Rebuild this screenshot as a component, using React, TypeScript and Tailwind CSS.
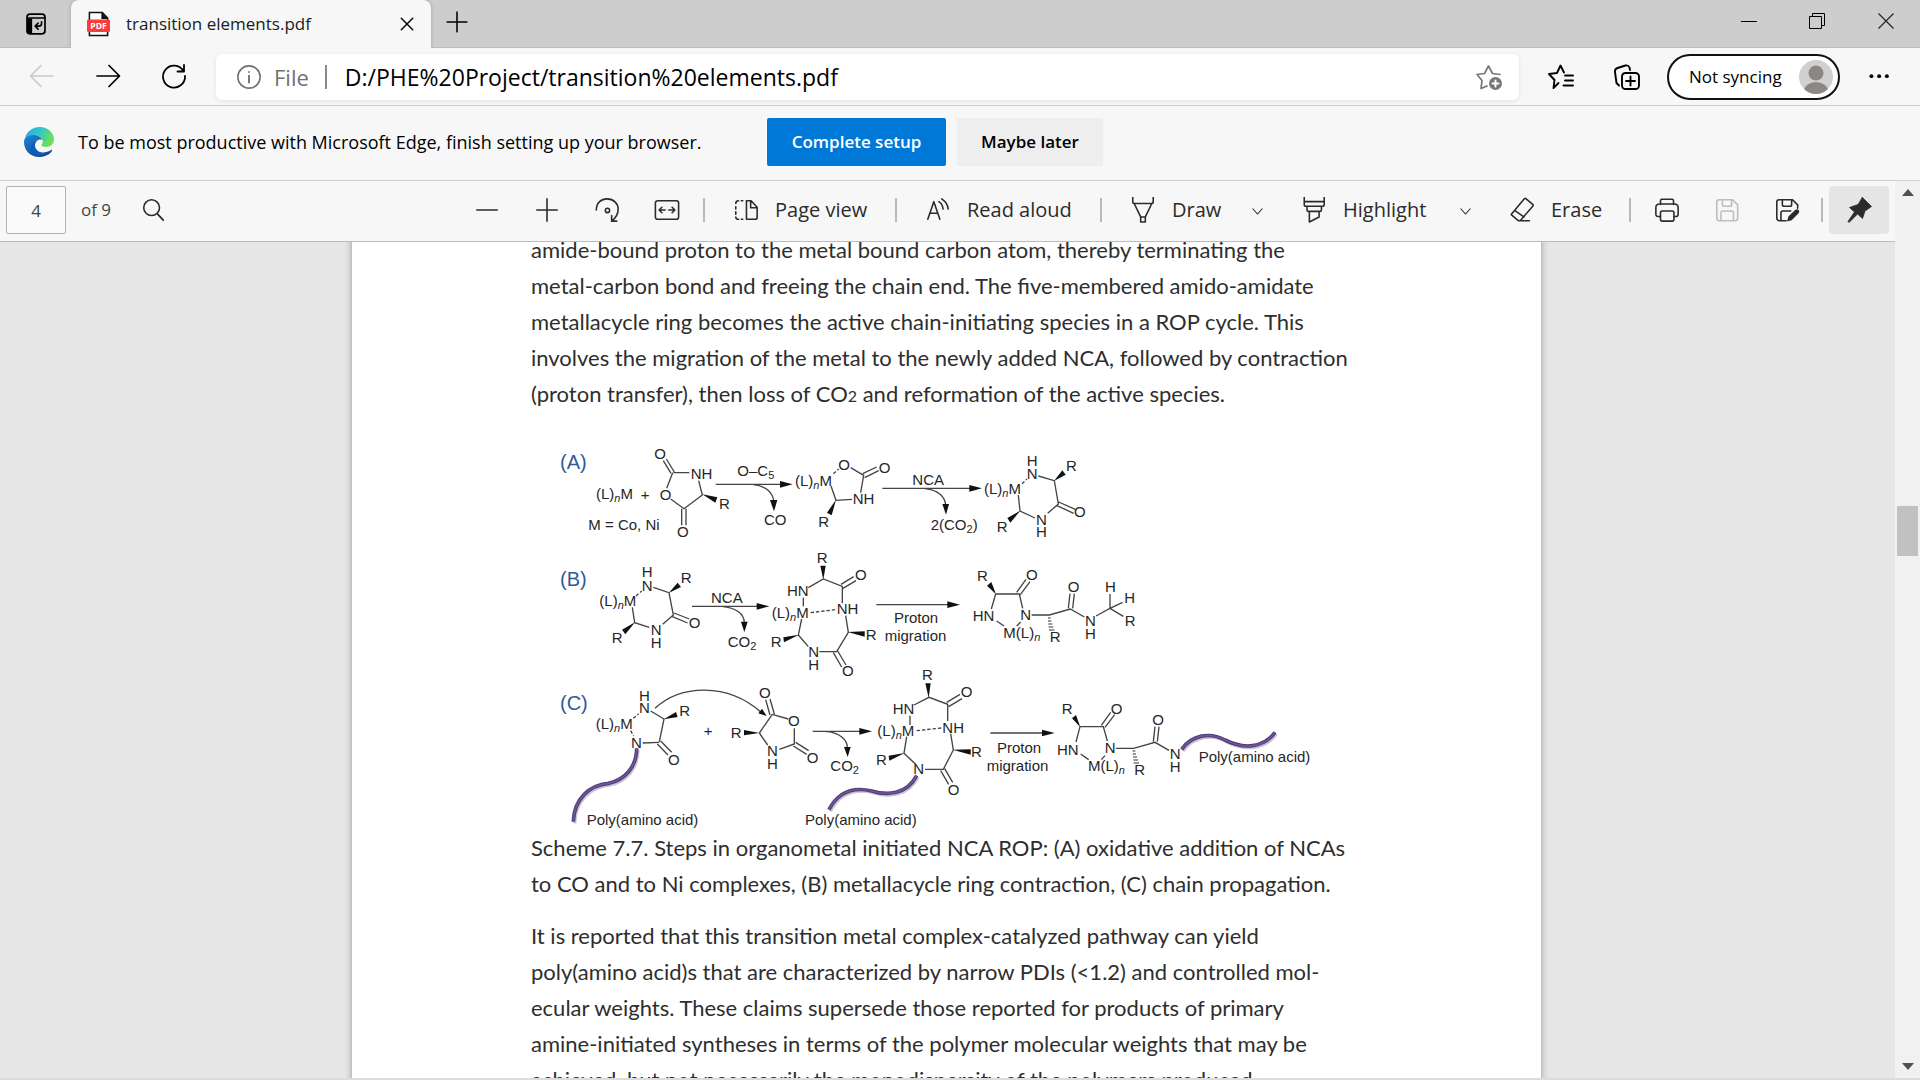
import React from "react";

type IconProps = { children: React.ReactNode; className?: string; size?: number };

function Icon({ children, className = "", size = 28 }: IconProps) {
  return (
    <svg
      width={size}
      height={size}
      viewBox="0 0 28 28"
      fill="none"
      stroke="currentColor"
      strokeWidth={1.7}
      strokeLinecap="round"
      strokeLinejoin="round"
      aria-hidden="true"
      className={`shrink-0 ${className}`}
    >
      {children}
    </svg>
  );
}

/* ---------- Scheme drawing: each fragment is laid out on a grid of thirds of a unit ---------- */

type Label = [number, number, string];

function AtomText({ x, y, value }: { x: number; y: number; value: string }) {
  const parts = value.split(/(_[n\d])/).filter(Boolean);
  let lowered = false;
  return (
    <text x={x} y={y}>
      {parts.map((p, i) => {
        if (p[0] === "_") {
          lowered = true;
          return (
            <tspan key={i} dy={3} fontSize={11} fontStyle={p[1] === "n" ? "italic" : "normal"}>
              {p[1]}
            </tspan>
          );
        }
        const dy = lowered ? -3 : 0;
        lowered = false;
        return (
          <tspan key={i} dy={dy}>
            {p}
          </tspan>
        );
      })}
    </text>
  );
}

type FragmentProps = {
  at: [number, number];
  bonds: string;
  wedges: string[];
  dashes?: string;
  hashes?: string;
  chain?: string;
  labels: Label[];
};

function Fragment({ at, bonds, wedges, dashes, hashes, chain, labels }: FragmentProps) {
  const [ox, oy] = at;
  return (
    <g>
      <g transform={`translate(${ox} ${oy}) scale(${1 / 3})`} stroke="#444" strokeWidth={4} fill="none">
        <path d={bonds} />
        {dashes && <path d={dashes} strokeDasharray="10 6" />}
        {hashes && <path d={hashes} stroke="#333" strokeWidth={3} />}
        {wedges.map((w) => (
          <polygon key={w} points={w} fill="#111" stroke="none" />
        ))}
        {chain && (
          <g strokeLinecap="butt">
            <path d={chain} stroke="#c9c3d3" strokeWidth={10} transform="translate(4 5)" />
            <path d={chain} stroke="#4f3a78" strokeWidth={11} />
            <path d={chain} stroke="#6d5699" strokeWidth={5} />
          </g>
        )}
      </g>
      {labels.map(([x, y, t]) => (
        <AtomText key={`${x}-${y}`} x={ox + x / 3} y={oy + y / 3} value={t} />
      ))}
    </g>
  );
}

function Scheme() {
  return (
    <svg
      viewBox="531 412 831 418"
      className="block w-full"
      role="img"
      aria-label="Steps in organometal initiated NCA ROP"
      fontFamily="'Liberation Sans', Arial, sans-serif"
      fontSize={15}
      fill="#262626"
    >
      <g fill="#2f5b9c" fontSize={20}>
        <text x={560} y={469}>(A)</text>
        <text x={560} y={586}>(B)</text>
        <text x={560} y={710}>(C)</text>
      </g>

      <Fragment
        at={[540, 430]}
        bonds="M370 92L393 130M379 87L403 126M400 128H448M476 152L487 195L432 236L392 207M380 175L398 128M425 236V286M438 236V286M527 163H725M640 164C680 168 700 190 701 215"
        wedges={["487,193 532,202 526,218", "720,153 758,163 720,173", "690,210 712,210 702,244"]}
        labels={[
          [343, 87, "O"], [452, 147, "NH"], [359, 210, "O"], [537, 237, "R"], [411, 321, "O"],
          [302, 210, "+"], [145, 300, "M = Co, Ni"], [168, 207, "(L)_nM"], [592, 138, "O–C_5"],
          [672, 285, "CO"], [765, 168, "(L)_nM"],
        ]}
      />
      <Fragment
        at={[820, 430]}
        bonds="M92 113L131 136L122 188M128 131L170 111M134 143L176 122M96 208L48 211L33 168M187 175H450M315 176C355 180 375 200 377 225M655 138L703 152L715 222L683 250M716 216L766 238M711 227L761 250M645 264L600 243L595 195"
        dashes="M40 131L56 117M606 161L621 147"
        wedges={[
          "48,209 21,248 35,256", "448,165 486,175 448,185", "367,222 387,222 378,254",
          "702,153 727,121 737,134", "601,242 562,264 571,278",
        ]}
        labels={[
          [55, 120, "O"], [176, 129, "O"], [98, 223, "NH"], [-5, 290, "R"], [277, 165, "NCA"],
          [332, 300, "2(CO_2)"], [492, 193, "(L)_nM"], [620, 108, "H"], [620, 147, "N"],
          [738, 123, "R"], [762, 260, "O"], [648, 284, "N"], [648, 320, "H"], [530, 305, "R"],
        ]}
      />

      <Fragment
        at={[540, 545]}
        bonds="M340 127L387 143L400 210L368 238M402 204L448 222M397 215L443 234M328 247L284 233L277 187M456 184H655M545 184C590 188 612 208 613 232M805 128L850 102L907 124V175M903 118L941 95M909 130L948 107M790 158V184M917 212L925 262L890 320H838M805 305L775 270L785 222M880 323L905 366M893 318L918 360"
        dashes="M288 153L305 138M812 203L886 194"
        wedges={[
          "386,144 413,113 423,126", "285,232 246,254 256,268", "650,174 688,184 650,194",
          "603,230 623,230 613,262", "850,104 841,62 857,62", "923,261 974,259 974,275", "777,269 730,277 732,292",
        ]}
        labels={[
          [178, 183, "(L)_nM"], [305, 97, "H"], [305, 137, "N"], [422, 115, "R"], [446, 250, "O"],
          [332, 271, "N"], [332, 309, "H"], [215, 294, "R"], [513, 173, "NCA"], [563, 305, "CO_2"],
          [830, 53, "R"], [741, 153, "HN"], [945, 105, "O"], [890, 208, "NH"], [695, 219, "(L)_nM"],
          [977, 286, "R"], [805, 335, "N"], [805, 374, "H"], [692, 305, "R"], [906, 393, "O"],
        ]}
      />
      <Fragment
        at={[850, 545]}
        bonds="M79 179H295M437 147H508L518 190M500 142L528 103M511 149L540 110M437 147L424 192M440 228L462 243M512 231L500 243M545 210H598L661 192L703 216M655 190L660 146M668 190L673 146M738 213L780 190V147M780 190L818 172M780 190L820 214"
        hashes="M594 219H602M594 228H604M595 237H607M596 246H610M597 255H613"
        wedges={["292,169 330,179 292,189", "438,148 411,122 424,111"]}
        labels={[
          [132, 233, "Proton"], [104, 287, "migration"], [381, 107, "R"], [528, 106, "O"],
          [368, 228, "HN"], [511, 226, "N"], [460, 279, "M(L)_n"], [599, 292, "R"], [653, 141, "O"],
          [705, 243, "N"], [705, 281, "H"], [765, 141, "H"], [823, 174, "H"], [824, 242, "R"],
        ]}
      />

      <Fragment
        at={[540, 665]}
        bonds="M332 138L372 162L358 230M308 234L358 232M352 237L384 270M362 228L395 262M345 130C420 60 560 50 665 143M658 204L697 148M690 150L677 104M703 147L690 102M697 148L745 162M763 190V237L718 253M683 240L658 204M760 243L800 268M767 232L806 257"
        dashes="M280 160L296 146M272 197L281 213"
        wedges={["371,163 408,141 413,156", "680,153 655,145 666,131", "658,204 612,195 612,211"]}
        chain="M290 250C290 305 255 345 205 355C150 360 102 400 100 470"
        labels={[
          [167, 193, "(L)_nM"], [297, 107, "H"], [297, 145, "N"], [418, 152, "R"], [273, 248, "N"],
          [384, 300, "O"], [140, 480, "Poly(amino acid)"], [491, 214, "+"], [572, 220, "R"],
          [657, 100, "O"], [744, 184, "O"], [681, 274, "N"], [681, 311, "H"], [800, 293, "O"],
        ]}
      />
      <Fragment
        at={[790, 665]}
        bonds="M68 199H215M105 199C150 202 172 225 172 248M372 120L417 97L473 118V168M470 112L510 88M476 125L516 101M360 152V180M482 206L490 255L460 313H405M377 298L342 265L350 215M452 317L476 358M464 311L488 352M601 204H760"
        dashes="M380 197L454 189"
        wedges={[
          "208,189 246,199 208,209", "162,246 182,246 173,276", "416,99 406,55 422,55",
          "488,254 542,253 542,269", "344,264 296,272 298,287", "756,194 794,204 756,214",
        ]}
        chain="M380 332C350 390 290 392 245 378C190 365 145 380 117 434"
        labels={[
          [121, 317, "CO_2"], [396, 44, "R"], [308, 146, "HN"], [512, 97, "O"], [457, 204, "NH"],
          [262, 213, "(L)_nM"], [543, 276, "R"], [370, 328, "N"], [258, 300, "R"], [473, 390, "O"],
          [45, 480, "Poly(amino acid)"], [621, 265, "Proton"], [590, 317, "migration"],
        ]}
      />
      <Fragment
        at={[1040, 660]}
        bonds="M120 200H190L202 243M184 196L212 157M195 202L224 164M120 200L108 246M122 282L146 299M195 287L184 299M228 265H281L345 247L387 271M340 245L345 200M352 245L357 200"
        hashes="M278 273H286M278 282H288M279 291H291M280 300H294M281 309H297"
        wedges={["121,202 96,175 108,165"]}
        chain="M425 268C455 225 510 215 555 240C610 268 670 265 705 217"
        labels={[
          [65, 161, "R"], [212, 161, "O"], [51, 284, "HN"], [194, 280, "N"], [144, 332, "M(L)_n"],
          [283, 346, "R"], [337, 195, "O"], [389, 297, "N"], [389, 336, "H"], [476, 307, "Poly(amino acid)"],
        ]}
      />
    </svg>
  );
}

/* ---------- Browser chrome ---------- */

function TabStrip() {
  return (
    <header className="flex h-12 items-stretch bg-[#cdcdcd] shadow-[inset_0_-1px_0_#bdbdbd]">
      <button aria-label="Tab actions" className="flex w-[71px] items-center justify-center">
        <Icon size={24}>
          <rect x="3.5" y="2.5" width="21" height="23" rx="3.5" strokeWidth={2} />
          <path d="M4 7H24" strokeWidth={1.6} />
          <path d="M3.5 7.500H9.500V25H6Q3.500 24 3.500 22Z" fill="currentColor" stroke="none" />
          <path d="M20.500 11.500V13.500Q20.500 16.500 17.500 16.500H13.500M16.500 13L13 16.500L16.500 20" strokeWidth={1.900} />
        </Icon>
      </button>
      <div className="flex w-[360px] items-center rounded-t-lg bg-[#f7f7f7] pl-4 shadow-[0_0_4px_rgba(0,0,0,0.2)] [clip-path:inset(-4px_-4px_0_-4px)]">
        <svg width="23" height="26" viewBox="0 0 24 26" preserveAspectRatio="none" className="shrink-0" aria-hidden="true">
          <path d="M2.500 1.500H16L21.500 7V24.500H2.500Z" fill="#fff" stroke="#111" strokeWidth="1.6" />
          <path d="M15 1V8H22Z" fill="#111" />
          <rect x="0" y="8.500" width="24" height="12.500" rx="1.500" fill="#fb3c3c" />
          <text x="12" y="18" textAnchor="middle" fontSize="9" fontWeight="700" fill="#fff" fontFamily="'Open Sans', sans-serif">
            PDF
          </text>
        </svg>
        <span className="ml-4 flex-1 whitespace-nowrap text-[17px] text-[#1b1b1b]">transition elements.pdf</span>
        <button aria-label="Close tab" className="mr-2 flex h-8 w-8 items-center justify-center text-black">
          <Icon size={20}>
            <path d="M6 6L22 22M22 6L6 22" strokeWidth={2} />
          </Icon>
        </button>
      </div>
      <button aria-label="New tab" className="flex w-[51px] items-center justify-center pb-1">
        <Icon size={24}>
          <path d="M14 2.500V25.500M2.500 14H25.500" strokeWidth={1.800} />
        </Icon>
      </button>
      <div className="ml-auto flex pb-1.5">
        <button aria-label="Minimize" className="flex w-[68px] items-center justify-center">
          <span className="h-px w-4 bg-black" />
        </button>
        <button aria-label="Restore" className="flex w-[68px] items-center justify-center">
          <svg width="16" height="16" viewBox="0 0 16 16" fill="none" stroke="#000" aria-hidden="true">
            <path d="M.5 3.500H12.500V15.500H.5ZM3.500 3.500V.5H15.500V12.500H12.500" />
          </svg>
        </button>
        <button aria-label="Close window" className="flex w-[69px] items-center justify-center">
          <svg width="16" height="16" viewBox="0 0 16 16" fill="none" stroke="#222" strokeWidth="1.200" aria-hidden="true">
            <path d="M.5.5L15.500 15.500M15.500.5L.5 15.500" />
          </svg>
        </button>
      </div>
    </header>
  );
}

function AddressRow() {
  return (
    <nav aria-label="Navigation" className="flex h-[58px] items-center border-b border-[#cfcfcf] bg-[#f7f7f7] pt-px">
      <div className="flex w-[216px] items-center pb-0.5 pl-[9px]">
        <button aria-label="Back" disabled className="flex w-[66px] justify-center text-[#cacaca]">
          <Icon><path d="M25 14H3M13 3.500L2.500 14L13 24.500" /></Icon>
        </button>
        <button aria-label="Forward" className="flex w-[66px] justify-center text-black">
          <Icon><path d="M3 14H25M15 3.500L25.500 14L15 24.500" /></Icon>
        </button>
        <button aria-label="Refresh" className="flex w-[66px] justify-center text-black">
          <Icon><path d="M23.500 9A11 11 0 1 0 25 14M24 3V9.500H17.500" strokeWidth={1.800} /></Icon>
        </button>
      </div>
      <div className="flex h-[46px] flex-1 items-center rounded-md bg-white pl-5 pr-4 shadow-[0_1px_5px_rgba(0,0,0,0.09)]">
        <Icon size={26} className="text-[#707070]">
          <circle cx="14" cy="14" r="12" />
          <path d="M14 12.500V20M14 8.500V8.600" strokeWidth={2} />
        </Icon>
        <span className="ml-3 text-[22px] text-[#707070]">File</span>
        <span className="ml-4 h-6 w-0.5 bg-[#8a8a8a]" />
        <input
          aria-label="Address"
          readOnly
          defaultValue="D:/PHE%20Project/transition%20elements.pdf"
          className="ml-[18px] min-w-0 flex-1 bg-transparent text-[23px] text-black outline-none"
        />
        <button aria-label="Add to favorites" className="text-[#767676]">
          <Icon>
            <path d="M12 23L6 25.500L7 17.500L2 11.500L9.500 10.500L13.500 3L17.500 10.500L25 11.500" />
            <circle cx="20.500" cy="20.500" r="6.500" fill="currentColor" stroke="none" />
            <path d="M20.500 17.500V23.500M17.500 20.500H23.500" stroke="#fff" strokeWidth={2} />
          </Icon>
        </button>
      </div>
      <button aria-label="Favorites" className="ml-7">
        <Icon>
          <path d="M11.500 20L6.500 25L7.500 17L2 11L10 10L13.500 2.500L17 9.500M18 12.500H26M18 17.500H26M16.500 22.500H26" strokeWidth={1.900} />
        </Icon>
      </button>
      <button aria-label="Collections" className="ml-[38px]">
        <Icon>
          <path d="M6 22.500L3.500 20L2 9Q1.500 6 4.500 5L12.500 2.500Q15.500 2 16.500 4.500L17 7" strokeWidth={1.900} />
          <rect x="9" y="10" width="17" height="16" rx="3.500" strokeWidth={1.900} />
          <path d="M17.500 13.500V22.500M13 18H22" strokeWidth={1.900} />
        </Icon>
      </button>
      <button className="ml-[26px] flex h-[46px] w-[173px] items-center justify-between rounded-full border-2 border-[#111] bg-white pl-5 pr-[5px] text-[17px] text-black">
        Not syncing
        <svg width="34" height="34" viewBox="0 0 34 34" aria-hidden="true">
          <defs>
            <clipPath id="avatar"><circle cx="17" cy="17" r="17" /></clipPath>
          </defs>
          <g clipPath="url(#avatar)">
            <rect width="34" height="34" fill="#d2d0ce" />
            <circle cx="17" cy="13" r="7.500" fill="#8a8785" />
            <ellipse cx="17" cy="31" rx="12" ry="9" fill="#8a8785" />
          </g>
        </svg>
      </button>
      <button aria-label="Settings and more" className="flex w-20 justify-center">
        <Icon size={24}>
          <g fill="currentColor" stroke="none">
            <circle cx="4" cy="13" r="2.300" /><circle cx="13" cy="13" r="2.300" /><circle cx="22" cy="13" r="2.300" />
          </g>
        </Icon>
      </button>
    </nav>
  );
}

function SetupBar() {
  return (
    <section aria-label="Browser setup" className="flex h-[75px] items-center border-b border-[#cfcfcf] bg-[#f7f7f7] pb-0.5 pl-6">
      <svg width="30" height="30" viewBox="0 0 30 30" aria-hidden="true">
        <defs>
          <linearGradient id="edgeTop" x1="0" y1="0" x2="1" y2="0.4">
            <stop offset="0" stopColor="#2aa7e6" /><stop offset="0.5" stopColor="#2fc3cf" /><stop offset="1" stopColor="#6be05a" />
          </linearGradient>
          <linearGradient id="edgeLow" x1="0" y1="0" x2="0.6" y2="1">
            <stop offset="0" stopColor="#1b86d6" /><stop offset="1" stopColor="#114a9b" />
          </linearGradient>
        </defs>
        <path d="M1 11C3 4 9 0 15.500 0C24 0 30 6 30 12.500C30 17 26.500 20 22 20C19 20 17.500 19 17.500 18C17.500 17.200 18.800 16.500 18.800 14.500C18.800 11.500 16 8.500 11 8.500C6 8.500 2 10 0 14.500Z" fill="url(#edgeTop)" />
        <path d="M0 15C0 10.500 5 8 9.500 8C14 8 17.500 10.500 18.500 13C15 11.500 11 14 11 18.500C11 23 15.500 26 20 25.500C23 25.200 25.500 24 27.300 23C28 22.600 28.500 23 28 24C25.500 27.500 21 30 15 30C6.500 30 0 23.500 0 15Z" fill="url(#edgeLow)" />
        <path d="M11 17C9.500 22 14 27 21 25.700C17 29.500 11 29.500 8 25.500C5.500 21.500 7.500 15.500 13.500 12.800C12 14 11.300 15.500 11 17Z" fill="#0d5db8" />
      </svg>
      <p className="ml-6 w-[689px] whitespace-nowrap text-lg text-black">
        To be most productive with Microsoft Edge, finish setting up your browser.
      </p>
      <button className="h-12 w-[179px] rounded-xs bg-[#0078d7] text-[17px] font-semibold text-white">Complete setup</button>
      <button className="ml-[11px] h-12 w-[146px] rounded-xs bg-[#eeeeee] text-[17px] font-semibold text-black">Maybe later</button>
    </section>
  );
}

function Separator() {
  return <span className="h-6 w-0.5 shrink-0 bg-[#b9b9b9]" />;
}

function ToolIcon({ label, children, disabled = false }: { label: string; children: React.ReactNode; disabled?: boolean }) {
  return (
    <button
      aria-label={label}
      disabled={disabled}
      className="flex h-12 w-15 shrink-0 items-center justify-center disabled:text-[#bdbdbd]"
    >
      <Icon size={26}>{children}</Icon>
    </button>
  );
}

function ToolButton({ label, width, children }: { label: string; width: string; children: React.ReactNode }) {
  return (
    <button className={`flex h-12 shrink-0 items-center gap-4 whitespace-nowrap text-xl ${width}`}>
      <Icon size={26}>{children}</Icon>
      <span>{label}</span>
    </button>
  );
}

function Chevron({ label }: { label: string }) {
  return (
    <button aria-label={label} className="flex h-12 w-11 shrink-0 items-center justify-center pt-0.5">
      <svg width="11" height="7" viewBox="0 0 11 7" fill="none" stroke="currentColor" strokeWidth="1.100" aria-hidden="true">
        <path d="M.5.500L5.500 6L10.500.500" />
      </svg>
    </button>
  );
}

function PdfToolbar() {
  return (
    <div role="toolbar" aria-label="PDF tools" className="flex h-[61px] items-center border-b border-[#bcbcbc] bg-[#f7f7f7] pb-0.5 pr-1.5 text-[#2b2b2b]">
      <input
        aria-label="Page number"
        defaultValue="4"
        className="ml-1.5 h-12 w-[60px] rounded-xs border border-[#b3b3b3] bg-[#fafafa] text-center text-[17px] text-[#444] outline-none"
      />
      <span className="ml-[15px] text-[17px] text-[#444]">of 9</span>
      <button aria-label="Find" className="ml-[29px]">
        <Icon size={26}>
          <circle cx="12.500" cy="11.500" r="8.500" />
          <path d="M18.500 18L25 25" strokeWidth={1.900} />
        </Icon>
      </button>
      <div className="ml-auto flex items-center">
        <ToolIcon label="Zoom out"><path d="M3 14H25" /></ToolIcon>
        <ToolIcon label="Zoom in"><path d="M14 2V26M3 14H25" /></ToolIcon>
        <ToolIcon label="Rotate">
          <path d="M2.500 14C2.500 6 8 2 14 2C21 2 26 7 26 13C26 18 24 22 19.500 25.500M19 20V26H24.500" />
          <circle cx="14.500" cy="14.500" r="2.300" />
        </ToolIcon>
        <ToolIcon label="Fit to width">
          <rect x="1.500" y="4" width="25" height="20" rx="2.500" />
          <path d="M12 14H5.500M8.500 11L5.500 14L8.500 17M16 14H22.500M19.500 11L22.500 14L19.500 17" />
        </ToolIcon>
        <span className="ml-1.5" />
        <Separator />
        <ToolButton label="Page view" width="w-[190px] pl-7">
          <path d="M14.500 4V24H24Q26 24 26 22V11L19.500 4ZM19 4.500V11.500H25.500" />
          <path d="M10.500 4H9M6 4Q3 4 3 7M3 10.500V13M3 16V18.500M3 21.500Q3 24 6 24M9 24H10.500" />
        </ToolButton>
        <Separator />
        <ToolButton label="Read aloud" width="w-[203px] pl-7">
          <path d="M3 24L9.500 5L16 24M5.500 17.500H13.500M15 5Q19 7.500 19.500 13M18 2Q24.500 6.500 25 13" />
        </ToolButton>
        <Separator />
        <ToolButton label="Draw" width="w-[133px] pl-7">
          <path d="M3 0.500V5Q3 7 5 7H23Q25 7 25 5V0.500M4.500 7L11.500 21.500V27H16.500V21.500L23.500 7M11.500 21.500H16.500" />
        </ToolButton>
        <Chevron label="Draw options" />
        <ToolButton label="Highlight" width="w-[164px] pl-[22px]">
          <path d="M3.500 0.500V8Q3.500 10 5.500 10H23Q25 10 25 8V0.500M3.500 5H25M6.500 10V14Q6.500 15.500 8 15.500H20.500Q22 15.500 22 14V10M9 15.500V27L19.500 21.500V15.500" />
        </ToolButton>
        <Chevron label="Highlight options" />
        <ToolButton label="Erase" width="w-[142px] pl-[22px]">
          <path d="M3 18L16.500 2Q17.500 1 18.500 2L25.500 8Q26.500 9 25.500 10L13 24.500Q12 25.500 11 25.500H10L3 19.500Q2 18.800 3 18ZM6 14.500L16 21.500M12 25.500H22" />
        </ToolButton>
        <Separator />
        <span className="ml-1.5" />
        <ToolIcon label="Print">
          <path d="M7 8V4Q7 2.500 8.500 2.500H19.500Q21 2.500 21 4V8M6.500 21H4.500Q2 21 2 18.500V11.500Q2 7.500 6 7.500H22Q26 7.500 26 11.500V18.500Q26 21 23.500 21H21.500" />
          <rect x="7" y="15" width="14.500" height="11" rx="2" />
        </ToolIcon>
        <ToolIcon label="Save" disabled>
          <path d="M5.500 3H20L25.500 8.500V22.500Q25.500 25.500 22.500 25.500H6Q3 25.500 3 22.500V5.500Q3 3 5.500 3ZM9 3V8Q9 10 11 10H17Q19 10 19 8V3M7.500 25V17Q7.500 15 9.500 15H19Q21 15 21 17V25" />
        </ToolIcon>
        <ToolIcon label="Save as">
          <path d="M13 25.500H6Q3 25.500 3 22.500V5.500Q3 3 5.500 3H20L25.500 8.500V12M9 3V8Q9 10 11 10H17Q19 10 19 8V3M7.500 25V17Q7.500 15 9.500 15H18" />
          <path d="M14 26.500L15.500 21L23 13.800Q25 12.500 26.500 14Q28 15.500 26.500 17.500L19 25Z" fill="currentColor" stroke="none" />
        </ToolIcon>
        <span className="ml-1" />
        <Separator />
        <button aria-label="Unpin toolbar" aria-pressed="true" className="ml-1.5 flex h-12 w-15 items-center justify-center rounded-sm bg-[#e5e5e5]">
          <Icon>
            <path d="M17.500 1.500L26.500 10.500L20 15L17.500 22.500L12.500 18L4 26.500L3 25.500L9.500 16L4.500 11.500L13 8.500Z" fill="currentColor" stroke="currentColor" strokeWidth={0.800} />
          </Icon>
        </button>
      </div>
    </div>
  );
}

function ScrollBar() {
  return (
    <div role="scrollbar" aria-label="Document scroll" aria-valuenow={38} aria-controls="document" className="flex w-[25px] shrink-0 flex-col items-center bg-[#f1f1f1]">
      <svg width="12" height="7" viewBox="0 0 12 7" className="mt-2 shrink-0" aria-hidden="true"><path d="M6 0L12 7H0Z" fill="#505050" /></svg>
      <span className="min-h-0 grow-[308]" />
      <span className="h-[50px] w-[21px] shrink-0 bg-[#c1c1c1]" />
      <span className="min-h-0 grow-[505]" />
      <svg width="12" height="7" viewBox="0 0 12 7" className="mb-2 shrink-0" aria-hidden="true"><path d="M0 0H12L6 7Z" fill="#505050" /></svg>
    </div>
  );
}

const opening = [
  "amide-bound proton to the metal bound carbon atom, thereby terminating the",
  "metal-carbon bond and freeing the chain end. The five-membered amido-amidate",
  "metallacycle ring becomes the active chain-initiating species in a ROP cycle. This",
  "involves the migration of the metal to the newly added NCA, followed by contraction",
];

const caption = [
  "Scheme 7.7. Steps in organometal initiated NCA ROP: (A) oxidative addition of NCAs",
  "to CO and to Ni complexes, (B) metallacycle ring contraction, (C) chain propagation.",
];

const closing = [
  "It is reported that this transition metal complex-catalyzed pathway can yield",
  "poly(amino acid)s that are characterized by narrow PDIs (<1.2) and controlled mol-",
  "ecular weights. These claims supersede those reported for products of primary",
  "amine-initiated syntheses in terms of the polymer molecular weights that may be",
  "achieved, but not necessarily the monodispersity of the polymers produced.",
];

function Lines({ lines }: { lines: string[] }) {
  return (
    <>
      {lines.map((line) => (
        <span key={line} className="block whitespace-nowrap">{line}</span>
      ))}
    </>
  );
}

function Document() {
  return (
    <main id="document" className="min-h-0 flex-1 overflow-hidden bg-[#e6e6e6] pr-0.5">
      <article className="mx-auto -mt-2.5 w-full max-w-[1189px] bg-white px-[179px] pb-24 font-['Lato','Open_Sans',sans-serif] text-[22px] leading-9 text-[#2e2e2e] shadow-[0_0_7px_rgba(0,0,0,0.35)]">
        <p>
          <Lines lines={opening} />
          <span className="block whitespace-nowrap">
            (proton transfer), then loss of CO<span className="text-base">2</span> and reformation of the active species.
          </span>
        </p>
        <figure>
          <Scheme />
          <figcaption><Lines lines={caption} /></figcaption>
        </figure>
        <p className="mt-4"><Lines lines={closing} /></p>
      </article>
    </main>
  );
}

export default function App() {
  return (
    <div className="flex h-screen flex-col overflow-hidden border-b-2 border-[#dcdcdc] bg-[#e6e6e6] font-['Open_Sans','Noto_Sans',sans-serif]">
      <TabStrip />
      <AddressRow />
      <SetupBar />
      <div className="flex min-h-0 flex-1">
        <div className="flex min-w-0 flex-1 flex-col">
          <PdfToolbar />
          <Document />
        </div>
        <ScrollBar />
      </div>
    </div>
  );
}
